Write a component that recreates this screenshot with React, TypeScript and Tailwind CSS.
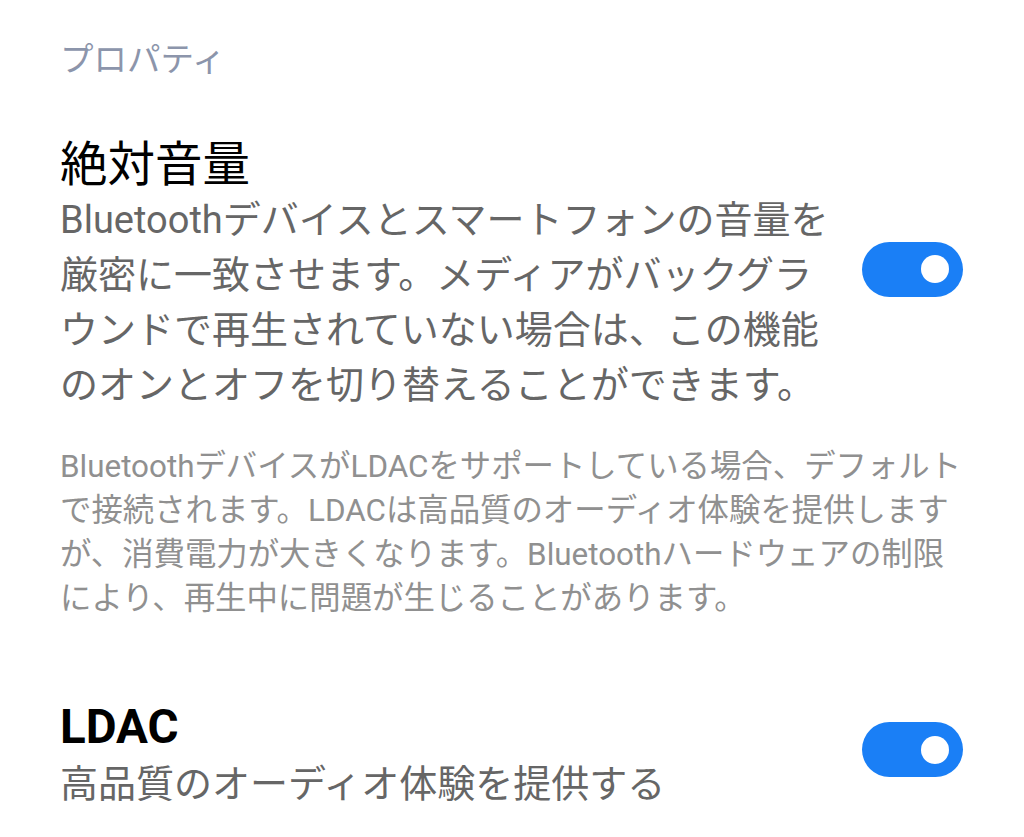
import React from "react";

function Toggle({ className = "" }: { className?: string }) {
  return (
    <div
      className={`w-[101px] h-[55px] shrink-0 rounded-full bg-[#1a7ff6] flex items-center justify-end pr-[14px] ${className}`}
    >
      <div className="w-[28px] h-[28px] rounded-full bg-white" />
    </div>
  );
}

export default function App() {
  return (
    <div className="w-[1024px] h-[837px] bg-white overflow-hidden font-['Roboto','Noto_Sans_CJK_JP',sans-serif]">
      <div className="pt-[40px] pl-[60px] pr-[61px]">
        <div className="text-[33.5px] leading-[40px] text-[#8c95ab] whitespace-nowrap">
          プロパティ
        </div>

        <div className="mt-[57px] flex items-center">
          <div className="flex-1 min-w-0">
            <div className="text-[47.5px] leading-[56px] text-black whitespace-nowrap">
              絶対音量
            </div>
            <div className="text-[38px] leading-[55px] text-[#666666] whitespace-nowrap">
              Bluetoothデバイスとスマートフォンの音量を
              <br />
              厳密に一致させます。メディアがバックグラ
              <br />
              ウンドで再生されていない場合は、この機能
              <br />
              のオンとオフを切り替えることができます。
            </div>
          </div>
          <Toggle className="mb-[12px]" />
        </div>

        <div className="mt-[32px] text-[31.4px] leading-[44px] text-[#909090] whitespace-nowrap">
          BluetoothデバイスがLDACをサポートしている場合、デフォルト
          <br />
          で接続されます。LDACは高品質のオーディオ体験を提供します
          <br />
          が、消費電力が大きくなります。Bluetoothハードウェアの制限
          <br />
          により、再生中に問題が生じることがあります。
        </div>

        <div className="mt-[78px] flex items-center">
          <div className="flex-1 min-w-0">
            <div className="text-[47.5px] leading-[56px] font-bold text-black whitespace-nowrap">
              LDAC
            </div>
            <div className="mt-[2px] text-[38px] leading-[55px] text-[#666666] whitespace-nowrap">
              高品質のオーディオ体験を提供する
            </div>
          </div>
          <Toggle className="mb-[12px]" />
        </div>
      </div>
    </div>
  );
}
